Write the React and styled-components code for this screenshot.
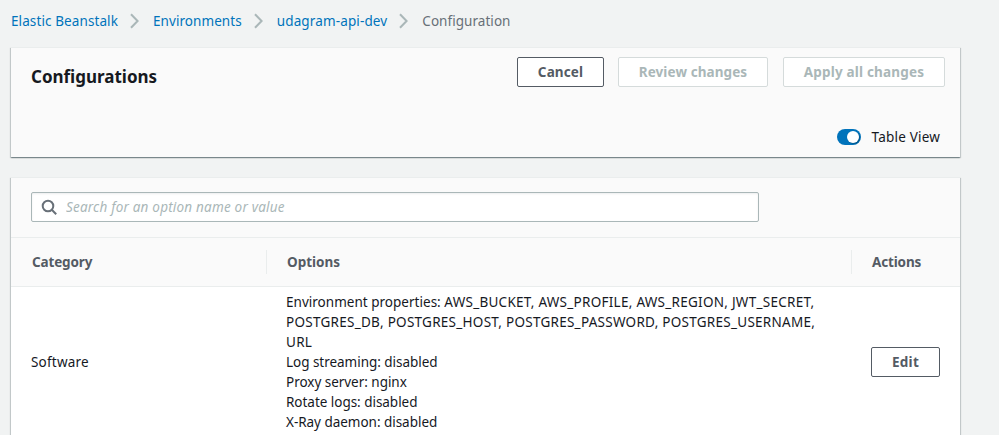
import React from "react";
import styled, { createGlobalStyle } from "styled-components";

const GlobalStyle = createGlobalStyle`
  *, *::before, *::after { box-sizing: border-box; }
  body {
    margin: 0;
    background: #f1f3f3;
    color: #16191f;
    font: 400 13.5px/20px "Noto Sans", "Open Sans", sans-serif;
  }
`;

const Page = styled.div`
  height: 435px;
  overflow: hidden;
  white-space: nowrap;
`;

const Breadcrumbs = styled.nav`
  display: flex;
  align-items: center;
  height: 47px;
  padding: 0 0 5px 11px;
`;

const Crumb = styled.a`
  color: ${(p) => (p.$current ? "#687078" : "#0073bb")};
  letter-spacing: ${(p) => p.$tracking}px;
  text-decoration: none;
`;

const ChevronIcon = styled.svg`
  flex: none;
  width: 9px;
  height: 16px;
  margin: 0 14px 0 12px;
  fill: none;
  stroke: #aab7b8;
  stroke-width: 2;
`;

const Card = styled.section`
  width: 949px;
  margin: 0 0 20px 11px;
  background: ${(p) => (p.$plain ? "#fff" : "#fafafa")};
  border-top: 1px solid #eaeded;
  box-shadow: 0 1px 1px 0 rgba(0, 28, 36, 0.3),
    1px 1px 1px 0 rgba(0, 28, 36, 0.15), -1px 1px 1px 0 rgba(0, 28, 36, 0.15);
`;

const HeaderCard = styled(Card)`
  display: flex;
  flex-direction: column;
  justify-content: space-between;
  height: 110px;
  padding: 9px 15px 10px 20px;
`;

const TitleBar = styled.div`
  display: flex;
  justify-content: space-between;
`;

const Title = styled.h1`
  margin: 8px 0 0;
  font-size: 17px;
  line-height: 24px;
  font-weight: 700;
`;

const Actions = styled.div`
  display: flex;
`;

const Button = styled.button`
  width: ${(p) => p.$width}px;
  height: 30px;
  margin: 0 0 0 ${(p) => p.$gap || 0}px;
  padding: 0;
  border: 1px solid #545b64;
  border-radius: 2px;
  background: #fff;
  color: #545b64;
  font: inherit;
  font-weight: 700;
  letter-spacing: ${(p) => p.$tracking}px;

  &:disabled {
    border-color: #d5dbdb;
    color: #aab7b8;
  }
`;

const ToggleRow = styled.label`
  display: flex;
  align-items: center;
  align-self: flex-end;
  gap: 11px;
  padding-right: 5px;
  letter-spacing: 0.2px;
`;

const Switch = styled.span`
  display: flex;
  justify-content: flex-end;
  width: 24px;
  height: 16px;
  padding: 2px;
  border-radius: 8px;
  background: #0073bb;
`;

const Knob = styled.span`
  width: 12px;
  height: 12px;
  border-radius: 50%;
  background: #fff;
  box-shadow: 1px 1px 1px rgba(0, 0, 0, 0.25);
`;

const SearchBar = styled.div`
  height: 60px;
  padding: 14px 20px 0;
  background: #fafafa;
  border-bottom: 1px solid #eaeded;
`;

const SearchField = styled.div`
  display: flex;
  align-items: center;
  gap: 8px;
  width: 728px;
  height: 30px;
  padding-left: 9px;
  border: 1px solid #aab7b8;
  border-radius: 2px;
  background: #fff;
  box-shadow: inset 0 1px 2px rgba(0, 28, 36, 0.08);
`;

const SearchIcon = styled.svg`
  flex: none;
  width: 17px;
  height: 17px;
  fill: none;
  stroke: #687078;
  stroke-width: 2;
`;

const SearchInput = styled.input`
  flex: 1;
  padding: 0;
  border: 0;
  outline: 0;
  background: transparent;
  font: inherit;
  letter-spacing: 0.2px;

  &::placeholder {
    color: #aab7b8;
    font-style: italic;
    opacity: 1;
  }
`;

const Row = styled.div`
  display: grid;
  grid-template-columns: 256px 585px 108px;
  align-items: center;
`;

const HeadRow = styled(Row)`
  height: 49px;
  background: #fafafa;
  border-bottom: 1px solid #eaeded;
`;

const HeadCell = styled.div`
  height: 24px;
  padding-left: ${(p) => p.$inset}px;
  border-right: ${(p) => (p.$last ? "0" : "1px solid #eaeded")};
  color: #545b64;
  font-weight: 700;
  line-height: 24px;
  letter-spacing: ${(p) => p.$tracking}px;
`;

const BodyRow = styled(Row)`
  padding: 5px 0;
  border-bottom: 1px solid #eaeded;
`;

const Cell = styled.div`
  padding-left: ${(p) => p.$inset}px;
  letter-spacing: ${(p) => p.$tracking || 0}px;
`;

const OptionLine = styled.div`
  letter-spacing: ${(p) => (p.$caps ? 0.27 : -0.03)}px;
`;

const OptionName = styled.span`
  letter-spacing: 0.02px;
`;

const Chevron = () => (
  <ChevronIcon viewBox="0 0 9 16" aria-hidden="true">
    <path d="M1 1.2 7.6 8 1 14.8" />
  </ChevronIcon>
);

export default function App() {
  return (
    <>
      <GlobalStyle />
      <Page>
        <Breadcrumbs>
          <Crumb $tracking={0.1}>Elastic Beanstalk</Crumb>
          <Chevron />
          <Crumb $tracking={0.07}>Environments</Crumb>
          <Chevron />
          <Crumb $tracking={0.13}>udagram-api-dev</Crumb>
          <Chevron />
          <Crumb $current $tracking={0.05}>Configuration</Crumb>
        </Breadcrumbs>

        <HeaderCard>
          <TitleBar>
            <Title>Configurations</Title>
            <Actions>
              <Button $width={87} $tracking={0.12}>Cancel</Button>
              <Button $width={150} $gap={14} $tracking={0.09} disabled>Review changes</Button>
              <Button $width={162} $gap={15} $tracking={0.19} disabled>Apply all changes</Button>
            </Actions>
          </TitleBar>
          <ToggleRow>
            <Switch><Knob /></Switch>
            Table View
          </ToggleRow>
        </HeaderCard>

        <Card $plain>
          <SearchBar>
            <SearchField>
              <SearchIcon viewBox="0 0 17 17" aria-hidden="true">
                <circle cx="7" cy="7" r="5.3" />
                <path d="M10.8 10.8 15.2 15.2" />
              </SearchIcon>
              <SearchInput placeholder="Search for an option name or value" />
            </SearchField>
          </SearchBar>
          <HeadRow>
            <HeadCell $inset={21} $tracking={-0.15}>Category</HeadCell>
            <HeadCell $inset={20} $tracking={0}>Options</HeadCell>
            <HeadCell $inset={20} $tracking={-0.15} $last>Actions</HeadCell>
          </HeadRow>
          <BodyRow>
            <Cell $inset={20} $tracking={0.2}>Software</Cell>
            <Cell $inset={19}>
              <OptionLine $caps>
                <OptionName>Environment properties: </OptionName>
                AWS_BUCKET, AWS_PROFILE, AWS_REGION, JWT_SECRET,
              </OptionLine>
              <OptionLine $caps>
                POSTGRES_DB, POSTGRES_HOST, POSTGRES_PASSWORD, POSTGRES_USERNAME,
              </OptionLine>
              <OptionLine $caps>URL</OptionLine>
              <OptionLine>Log streaming: disabled</OptionLine>
              <OptionLine>Proxy server: nginx</OptionLine>
              <OptionLine>Rotate logs: disabled</OptionLine>
              <OptionLine>X-Ray daemon: disabled</OptionLine>
            </Cell>
            <Cell $inset={19}>
              <Button $width={69} $tracking={0.3}>Edit</Button>
            </Cell>
          </BodyRow>
        </Card>
      </Page>
    </>
  );
}
